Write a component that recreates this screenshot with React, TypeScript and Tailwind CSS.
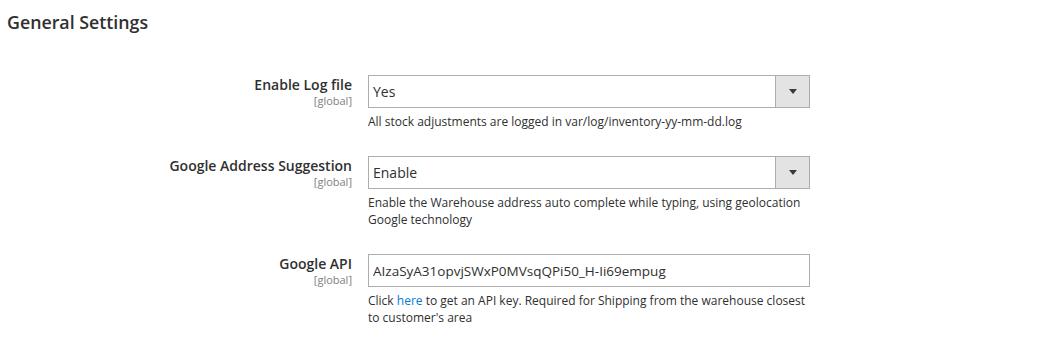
import { useState } from 'react';

const FONT = { fontFamily: '"Open Sans", "Liberation Sans", sans-serif' };

function Label({ title }: { title: string }) {
  return (
    <div className="w-[352px] shrink-0 text-right">
      <div className="text-[14px] leading-[19px] font-semibold text-[#303030]">{title}</div>
      <div className="text-[11px] leading-[13px] text-[#808080]">[global]</div>
    </div>
  );
}

function Select({ value }: { value: string }) {
  return (
    <div className="flex h-[33px] w-[442px] border border-[#adadad] bg-white">
      <div className="flex-1 pl-[4px] text-[14px] leading-[31px] text-[#303030]">{value}</div>
      <div className="flex w-[34px] items-center justify-center border-l border-[#adadad] bg-[#e3e3e3]">
        <span className="block h-0 w-0 border-x-[4px] border-t-[5px] border-x-transparent border-t-[#41362f]" />
      </div>
    </div>
  );
}

export default function App() {
  const [apiKey, setApiKey] = useState('AIzaSyA31opvjSWxP0MVsqQPi50_H-Ii69empug');

  return (
    <div className="h-[343px] w-[1058px] bg-white" style={FONT}>
      <h2 className="pl-[7px] pt-[10px] text-[17.8px] leading-[24px] font-semibold text-[#303030]">General Settings</h2>

      <div className="mt-[41px] flex flex-col gap-[26px]">
        {/* Enable Log file */}
        <div className="flex gap-[16px]">
          <Label title="Enable Log file" />
          <div>
            <Select value="Yes" />
            <p className="mt-[5px] text-[12px] leading-[17px] text-[#303030]">
              All stock adjustments are logged in var/log/inventory-yy-mm-dd.log
            </p>
          </div>
        </div>

        {/* Google Address Suggestion */}
        <div className="flex gap-[16px]">
          <Label title="Google Address Suggestion" />
          <div>
            <Select value="Enable" />
            <p className="mt-[5px] w-[442px] text-[12px] leading-[17px] text-[#303030]">
              Enable the Warehouse address auto complete while typing, using geolocation Google technology
            </p>
          </div>
        </div>

        {/* Google API */}
        <div className="flex gap-[16px]">
          <Label title="Google API" />
          <div>
            <input
              value={apiKey}
              onChange={(e) => setApiKey(e.target.value)}
              className="block h-[33px] w-[442px] border border-[#adadad] bg-white pl-[4px] text-[13.5px] text-[#303030] outline-none"
            />
            <p className="mt-[5px] w-[442px] text-[12px] leading-[17px] text-[#303030]">
              Click <a href="#" className="text-[#007bdb]">here</a> to get an API key. Required for Shipping from the warehouse closest to customer's area
            </p>
          </div>
        </div>
      </div>
    </div>
  );
}
